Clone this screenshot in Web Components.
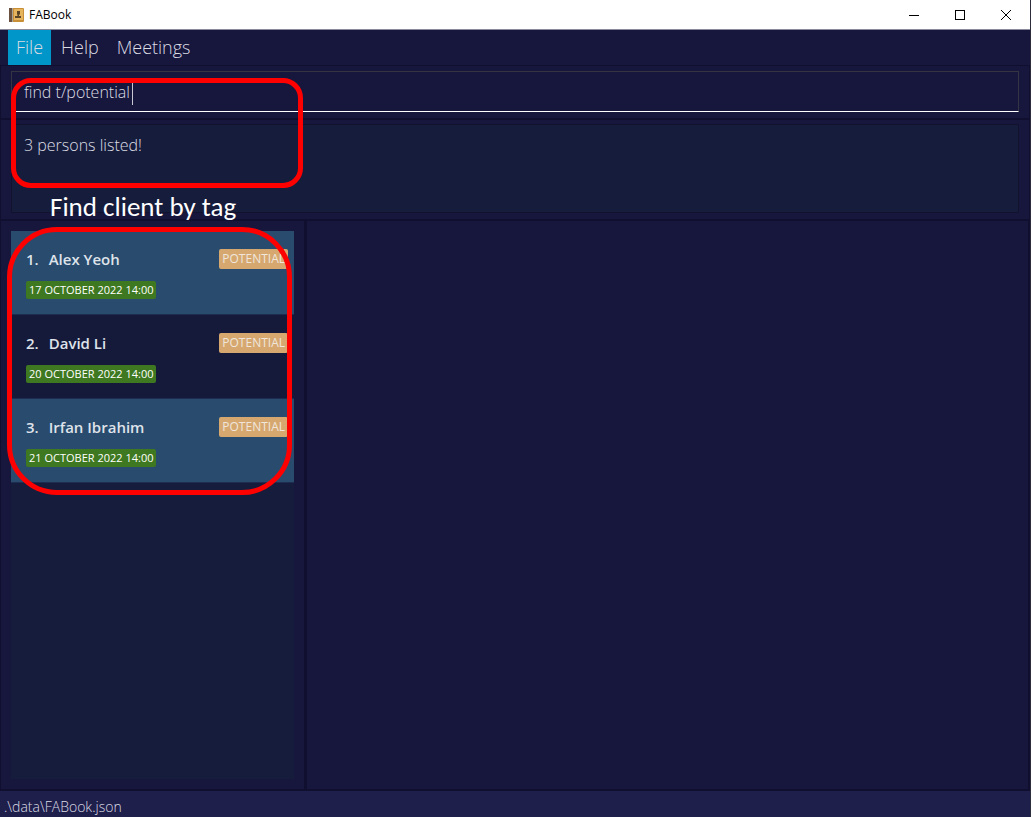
<!DOCTYPE html>
<html lang="en">
<head>
<meta charset="utf-8">
<title>FABook</title>
<style>
html,body{height:100%;margin:0}
body{background:#17163d;font-family:"Open Sans","Noto Sans",sans-serif;overflow:hidden}
</style>
</head>
<body>
<fa-app></fa-app>
<script>
function define(name, html, setup) {
  const template = document.createElement('template');
  template.innerHTML = html;
  customElements.define(name, class extends HTMLElement {
    constructor() {
      super();
      this.attachShadow({mode: 'open'}).append(template.content.cloneNode(true));
    }
    connectedCallback() { if (setup) setup(this, this.shadowRoot); }
  });
}

define('fa-titlebar', `
<style>
:host{display:flex;align-items:center;height:29px;padding-right:1px;background:#fff;border-bottom:1px solid #8b8b9c;color:#000}
.icon{margin-left:9px;width:15px;height:14px}
.name{flex:1;margin-left:5px;font-size:12px;line-height:16px}
button{width:46px;height:28px;padding:0;border:0;background:none;display:flex;align-items:center;justify-content:center}
</style>
<svg class="icon" viewBox="0 0 15 14" aria-hidden="true"><rect width="15" height="14" rx="1" fill="#c98f36"/><rect width="3" height="14" fill="#6b5140"/><path d="M3 0h1v14H3z" fill="#a7a29a"/><rect x="5" y="1" width="9" height="11" fill="#e6b45c"/><path d="M8 3h3v3l-1 1v1h2v2H6V8h2.500V7L8 6z" fill="#5c4426"/></svg>
<span class="name"><slot></slot></span>
<button aria-label="Minimize"><svg width="12" height="12"><path d="M1 6.500h10" stroke="#000"/></svg></button>
<button aria-label="Maximize"><svg width="12" height="12"><rect x="1.500" y="1.500" width="9" height="9" fill="none" stroke="#000"/></svg></button>
<button aria-label="Close"><svg width="12" height="12"><path d="M1 1l10 10M11 1L1 11" stroke="#000"/></svg></button>`);

define('fa-menu', `
<style>
:host{display:block}
button{height:35px;padding:0 8px;border:0;background:none;color:#dcdce4;font:300 18px/35px "Open Sans","Noto Sans",sans-serif}
:host([open]) button{background:#0096c9}
</style>
<button aria-haspopup="menu"><slot></slot></button>`);

define('fa-menubar', `
<style>:host{display:flex;gap:2px;height:35px;padding:0 8px;background:#17163d}</style>
<slot></slot>`);

define('fa-command', `
<style>
:host{display:block;padding:5px 10px 6px;border:1px solid #100f30;border-bottom-width:2px}
.field{display:flex;align-items:flex-start;height:31px;padding:8px 12px 0;border:1px solid #343443;border-bottom-color:#fff}
input{field-sizing:content;min-width:20px;height:24px;padding:0;border:0;outline:0;background:none;color:#dcdce4;font:300 16px/24px "Open Sans","Noto Sans",sans-serif}
.caret{width:1px;height:22px;margin:3px 0 0 2px;background:#c8c8d2}
</style>
<div class="field"><input aria-label="Command" value="find t/potential" spellcheck="false"><span class="caret"></span></div>`);

define('fa-result', `
<style>
:host{display:block;padding:4px 10px 6px;border:1px solid #100f30;border-top:0;border-bottom-width:2px}
output{display:block;height:79px;padding:8px 12px 0;border:1px solid #12122f;background:#161c3c;color:#dcdce4;font-size:16px;font-weight:300;line-height:24px}
</style>
<output><slot></slot></output>`);

define('fa-person', `
<style>
:host{display:grid;grid-template-columns:1fr auto;align-items:start;align-content:start;row-gap:12px;height:65px;padding:18px 6px 0 15px;border-bottom:1px solid #1d2c50;background:#151a3a;overflow:hidden}
:host(:nth-child(odd)){background:#294b6e}
.name{display:flex;gap:10px;color:#dfe3ea;font-size:15px;font-weight:600;line-height:20px}
.tag,.date{border-radius:2px;padding:0 3px;white-space:nowrap}
.tag{background:#d6a870;color:#f0e6dc;font-size:12px;line-height:20px}
.date{justify-self:start;background:#3e7820;color:#fff;font-size:11px;line-height:18px}
</style>
<span class="name"><span class="number"></span><span class="person"></span></span><span class="tag"></span><span class="date"></span>`,
(host, root) => {
  root.querySelector('.number').textContent = host.getAttribute('number') + '.';
  root.querySelector('.person').textContent = host.getAttribute('name');
  root.querySelector('.tag').textContent = host.getAttribute('tag');
  root.querySelector('.date').textContent = host.getAttribute('date');
});

define('fa-list', `
<style>
:host{display:flex;width:283px;padding:10px 10px;border:1px solid #100f30;border-top:0;border-right-width:3px}
.list{flex:1;min-width:0;background:#161c3c}
</style>
<div class="list"><slot></slot></div>`);

define('fa-status', `
<style>:host{display:block;height:26px;padding:0 4px;border-top:1px solid #100f30;background:#1f1f4c;color:#dcdce4;font-size:14px;font-weight:300;line-height:32px;white-space:nowrap}</style>
<slot></slot>`);

define('fa-callout', `
<style>
:host{position:absolute;box-sizing:border-box;border:5px solid #f00;pointer-events:none}
:host([kind=command]){left:11px;top:78px;width:292px;height:110px;border-radius:20px}
:host([kind=list]){left:7px;top:227px;width:285px;height:268px;border-radius:50px}
:host([kind=caption]){left:50px;top:192px;border:0;color:#fff;font:27px/30px Carlito,Lato,sans-serif;white-space:nowrap}
</style>
<slot></slot>`);

define('fa-app', `
<style>
:host{position:relative;display:flex;flex-direction:column;box-sizing:border-box;height:100vh;border-right:1px solid #2c2c3c;overflow:hidden}
main{display:flex;flex:1;min-height:0}
.detail{flex:1;border:1px solid #100f30;border-width:0 2px 1px 0}
</style>
<fa-titlebar>FABook</fa-titlebar>
<fa-menubar><fa-menu open>File</fa-menu><fa-menu>Help</fa-menu><fa-menu>Meetings</fa-menu></fa-menubar>
<fa-command></fa-command>
<fa-result>3 persons listed!</fa-result>
<main>
<fa-list>
<fa-person number="1" name="Alex Yeoh" tag="POTENTIAL" date="17 OCTOBER 2022 14:00"></fa-person>
<fa-person number="2" name="David Li" tag="POTENTIAL" date="20 OCTOBER 2022 14:00"></fa-person>
<fa-person number="3" name="Irfan Ibrahim" tag="POTENTIAL" date="21 OCTOBER 2022 14:00"></fa-person>
</fa-list>
<section class="detail" aria-label="Client details"></section>
</main>
<fa-status>.\\data\\FABook.json</fa-status>
<fa-callout kind="command"></fa-callout>
<fa-callout kind="caption">Find client by tag</fa-callout>
<fa-callout kind="list"></fa-callout>`);
</script>
</body>
</html>
